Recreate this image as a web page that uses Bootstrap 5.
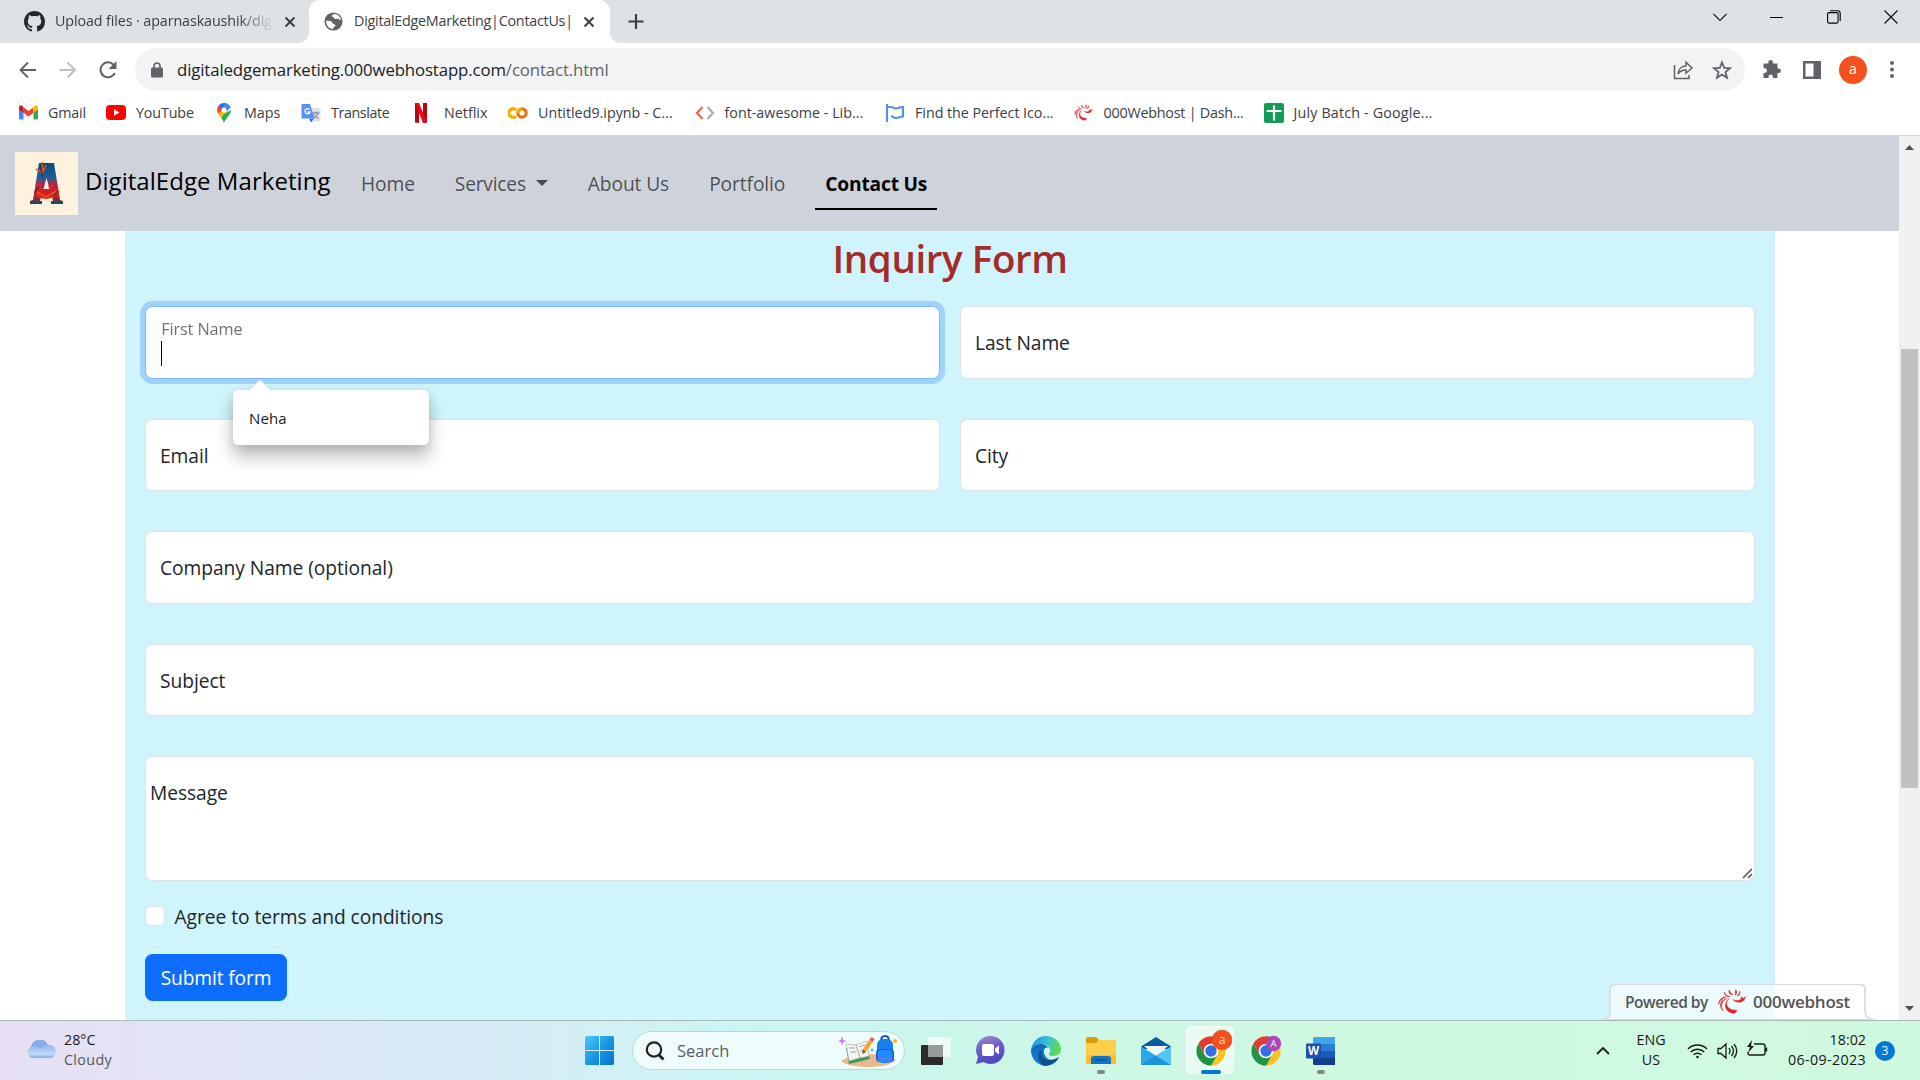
<!DOCTYPE html>
<html lang="en">
<head>
<meta charset="utf-8">
<title>DigitalEdgeMarketing|ContactUs|</title>
<link href="https://cdn.jsdelivr.net/npm/bootstrap@5.3.0/dist/css/bootstrap.min.css" rel="stylesheet">
<script src="https://cdn.jsdelivr.net/npm/bootstrap@5.3.0/dist/js/bootstrap.bundle.min.js"></script>
<style>
html{font-size:20px}
body{font-family:"Open Sans","Noto Sans",sans-serif;width:1920px;height:1080px;overflow:hidden;font-size:19.2px;line-height:30px}
svg{display:block;flex:none}
.ui{font-size:14.3px;line-height:20px;color:#3c4043;white-space:nowrap}
/* browser chrome */
.tabstrip{height:43px;background:#dee1e6}
.tab-idle{width:309px;padding-left:24px}
.tab-idle .ttl{width:219px;margin-left:10px;letter-spacing:-.1px;overflow:hidden;-webkit-mask-image:linear-gradient(90deg,#000 84%,transparent)}
.ttl{margin-bottom:2px}
.tab-live{width:301px;height:43px;background:#fff;border-radius:11px 11px 0 0;padding-left:15px}
.tab-live:before,.tab-live:after{content:"";position:absolute;bottom:0;width:10px;height:10px}
.tab-live:before{left:-10px;background:radial-gradient(circle at 0 0,transparent 9.5px,#fff 10px)}
.tab-live:after{right:-10px;background:radial-gradient(circle at 100% 0,transparent 9.5px,#fff 10px)}
.tab-live .ttl{width:219px;margin-left:11px;letter-spacing:-.24px;overflow:hidden}
.plus{margin-left:15px;margin-bottom:1px}
.winbtns{padding-right:22px;gap:43px}
.toolbar{height:53px;padding-left:18px}
.omni{width:1610px;height:43px;background:#f1f3f4;border-radius:22px;padding:0 13px 0 16px;margin-left:17px}
.url{font-size:16.8px;color:#202124;letter-spacing:-.12px;margin-left:14px}
.url span{color:#5f6368}
.starico{margin-left:18px}
.puzzle{margin-left:17px}
.avatar{width:28px;height:28px;background:#f4511e;color:#fff;font-size:14px;line-height:25px;margin:0 22px 0 17px}
.marks{height:40px;padding:0 0 6px 18px;border-bottom:1px solid #d5d7da}
.marks>div{display:flex;align-items:center;gap:10px;flex:none;width:188px}
.marks .ic{width:20px;display:flex;justify-content:center}
.marks>:nth-child(1){width:88px;letter-spacing:-.16px}
.marks>:nth-child(2){width:108px;letter-spacing:-.14px}
.marks>:nth-child(3){width:87px}
.marks>:nth-child(4){width:113px;letter-spacing:-.4px}
.marks>:nth-child(5){width:94px}
.marks>:nth-child(5) .ic{position:relative;left:-3px}
.marks>:nth-child(6){width:186.500px}
.marks>:nth-child(7){width:190.500px}
.marks>:nth-child(8){width:188.500px;letter-spacing:-.04px}
.marks>:nth-child(9){width:190px;letter-spacing:-.21px}
.marks>:nth-child(10){letter-spacing:.17px}
/* page */
.viewport{height:884px}
.page{width:1899px}
.topnav{height:95px;padding:0 0 0 15px;background:#ced3db}
.brand{font-size:24px;color:#000;letter-spacing:.05px;margin:0 20px 5px 7px;white-space:nowrap;line-height:36px;width:246px}
.topnav .nav-link{padding:11px 10px 9px;margin:0 10px;line-height:30px;color:rgba(0,0,0,.65);border-bottom:2px solid transparent;white-space:nowrap;letter-spacing:-.1px}
.topnav .nav-link.active{color:#000;font-weight:700;letter-spacing:-.19px;border-color:#000}
.topnav .dropdown-toggle{letter-spacing:-.21px}
.topnav .dropdown-toggle:after{margin-left:10px;border-top-width:6px;border-left-width:6px;border-right-width:6px;vertical-align:5px}
.sheet{width:1650px;height:789px;margin-left:125px;background:#cff4fc;padding:3px 20px 0}
.sheet h1{font-size:38.5px;font-weight:600;color:#a52a2a;letter-spacing:-.41px;line-height:48px;height:72px;margin:0;text-align:center}
.sheet .form-floating{height:72.5px;margin-bottom:40px}
.sheet .form-control{height:100%;min-height:0;border-color:#dee2e6;border-radius:7.5px;background:#fff;resize:none}
.sheet .form-floating>label{padding:22px 15px 19px;height:auto;line-height:30px;color:#212529;opacity:1;border:0;letter-spacing:-.05px}
.typing .form-control{border-color:#86b7fe;box-shadow:0 0 0 5px rgba(13,110,253,.25)}
.sheet .typing>label{opacity:.65;transform:scale(.85) translateY(-10px) translateX(4px);letter-spacing:-.15px}
.caret{position:absolute;left:16px;top:35px;width:1px;height:25px;background:#000}
.sheet .msg{height:125px;margin-bottom:20px}
.sheet .msg>label{padding-left:5px}
.grip{position:absolute;right:2px;bottom:2px}
.sheet .form-check{padding:0;margin:0;min-height:0;height:53px;gap:9.5px}
.sheet .form-check label{padding-top:1px;letter-spacing:-.04px}
.sheet .form-check-input{width:20px;height:20px;margin:5px 0 0;float:none;border-color:#dee2e6;border-radius:5px}
.sheet .btn{font-size:19.2px;letter-spacing:-.14px;width:142px;height:47px;padding:2px 0 0;border:0;border-radius:7.5px;background:#0d6efd}
.suggest{position:absolute;left:88px;top:84px;width:196px;height:55px;border-radius:5px;background:#fff;box-shadow:0 12px 18px rgba(0,0,0,.26),0 2px 8px rgba(0,0,0,.1);z-index:5;padding:17px 16px;font-size:15px;line-height:22px;color:#202124;letter-spacing:.1px}
.suggest svg{position:absolute;left:16px;top:-11px}
.powered{position:absolute;left:1600px;bottom:0;width:276px;height:36px;z-index:4}
.powered>svg:first-child{position:absolute;left:0;top:0}
.powered .txt{position:relative;padding-left:25px;height:36px;color:#555;font-weight:600;white-space:nowrap}
.pw1{font-size:15.5px;letter-spacing:-.5px;width:83px}
.pwi{margin:0 6px 1px 9px}
.pw2{font-size:17px;letter-spacing:-.26px}
.sb{width:21px;background:#f0f0f0}
.thumb{width:17px;height:439px;background:#c1c1c1;margin:213px auto 210px}
/* taskbar */
.taskbar{height:60px;border-top:1px solid #a9b8b8;background:linear-gradient(90deg,#e7dff3 0,#dfe6f6 14%,#d5eef6 28%,#c9f7f3 42%,#cbf6ea 50%,#cff8e2 65%,#cff9df 100%)}
.weather{width:560px;line-height:20px;gap:8px;padding-bottom:2px;margin-left:25px}
.weather svg{margin-bottom:3px}
.weather .ui{color:#1b1b1f}
.weather .cloudy{letter-spacing:.35px;color:#55565c}
.pill{width:273px;height:39px;border-radius:20px;background:rgba(255,255,255,.68);border:1px solid #b5dcdc;margin:0 3px 0 18px;padding:0 6px 0 12px}
.pill span{font-size:16.5px;color:#5a5f62;margin-left:12px}
.cell{width:55px;height:60px;flex:none;position:relative}
.cell.live:before{content:"";position:absolute;left:3px;top:5px;width:48px;height:48px;border-radius:6px;background:rgba(255,255,255,.55);border:1px solid rgba(255,255,255,.5)}
.cell.run:after,.cell.live:after{content:"";position:absolute;bottom:6.5px;width:8px;height:4px;border-radius:2px;background:#7b8c85}
.cell.live:after{width:20px;background:#0078d4}
.cell svg{position:relative;overflow:visible}
.tray{color:#1a1a1a;padding-right:25px}
.tray .ui{color:#1a1a1a;padding-bottom:2px}
.lang{width:40px;margin:0 16px 0 21px}
.vol,.bat{margin-left:9px}
.bat{margin-top:-3px}
.clock{width:98px;margin-right:9px}
.clock span{letter-spacing:.34px}
.count{width:20px;height:20px;background:#0078d4;color:#fff;font-size:12px;line-height:20px;text-align:center}
</style>
</head>
<body>
<svg width="0" height="0" class="position-absolute">
<defs>
<symbol id="x" viewBox="0 0 12 12"><path d="M1.500 1.500l9 9m0-9l-9 9" stroke="#3c4043" stroke-width="2" fill="none"/></symbol>
<symbol id="swirl" viewBox="0 0 30 26"><g fill="#e0252c" stroke="#e0252c" stroke-width=".5"><path d="M12 1c-1 3 1 5 4 5-2-1-3-3-4-5z"/><path d="M19 .5c-1 2 0 4-1 6 2-1 3-3 1-6z"/><path d="M23 2c0 2-1 4-3 5 3 0 4-2 3-5z"/><path d="M7 3c0 3 2 5 6 5-3-1-5-2-6-5z"/><path d="M29 8c-1 6-8 8-13 3 4 2 9 1 9-3 1 2 2 2 4 0z"/><path d="M12 10c-6 5-1 13 8 12-1 3-3 4-5 3-8-1-9-11-3-15z"/><path d="M10 10c-5 1-8 8-4 13-5-4-4-12 4-13z"/><path d="M9 8c-4 0-8 3-8 8 1-4 4-6 8-8z"/></g></symbol>
<symbol id="chrome" viewBox="0 0 48 48"><path fill="#e33b2e" d="M4.950 13A22 22 0 0 1 43.050 13H24L14.470 29.500Z"/><path fill="#fcc31e" d="M43.050 13A22 22 0 0 1 24 46L33.530 29.500 24 13Z"/><path fill="#229342" d="M24 46A22 22 0 0 1 4.950 13L14.470 29.500 24 35 33.530 29.500Z"/><circle cx="24" cy="24" r="11" fill="#fff"/><circle cx="24" cy="24" r="8.500" fill="#2f6fe4"/></symbol>
</defs>
</svg>

<div class="tabstrip d-flex align-items-center ui">
  <div class="tab-idle d-flex align-items-center">
    <svg width="21" height="21" viewBox="0 0 16 16" fill="#24292f"><path d="M8 0C3.580 0 0 3.580 0 8c0 3.540 2.290 6.530 5.470 7.590.4.070.55-.17.55-.38 0-.19-.01-.82-.01-1.490-2.010.37-2.530-.49-2.690-.94-.09-.23-.48-.94-.82-1.130-.28-.15-.68-.52-.01-.53.63-.01 1.080.58 1.230.82.720 1.210 1.870.87 2.330.66.070-.52.28-.87.51-1.070-1.780-.2-3.640-.89-3.640-3.950 0-.87.31-1.590.82-2.150-.08-.2-.36-1.020.08-2.120 0 0 .67-.21 2.200.82.640-.18 1.320-.27 2-.27s1.360.09 2 .27c1.530-1.040 2.200-.82 2.200-.82.440 1.100.16 1.920.08 2.120.51.56.82 1.270.82 2.150 0 3.070-1.870 3.750-3.650 3.950.29.25.54.73.54 1.480 0 1.070-.01 1.930-.01 2.200 0 .21.15.46.55.38A8.010 8.010 0 0 0 16 8c0-4.420-3.580-8-8-8z"/></svg>
    <span class="ttl">Upload files · aparnaskaushik/dig</span>
    <svg class="ms-2" width="12" height="12"><use href="#x"/></svg>
  </div>
  <div class="tab-live position-relative d-flex align-items-center">
    <svg width="19" height="19" viewBox="0 0 20 20"><circle cx="10" cy="10" r="9.500" fill="#5f6368"/><path fill="#fff" d="M11.500 2.200c-1 .6-2.800.5-3.200 1.600-.3 1.200.9 1.700 2 1.900.9.300.6 1.300 1.500 1.600 1.700.5 2.600-.7 3.900.3.700.6 1.500 1 2.200.7C17.400 5.400 15 2.900 11.500 2.200zM2.300 9.200c1.700-.2 3.800-.2 5.200.5 1.700.9 1 2.500 2.500 3 1 .4 2 .5 2.100 1.600 0 .9-1 1-1.700 1.600-.5.5-.7 1.200-.8 2-4.400 0-7.600-4-7.300-8.700z"/></svg>
    <span class="ttl">DigitalEdgeMarketing|ContactUs|</span>
    <svg class="ms-2" width="12" height="12"><use href="#x"/></svg>
  </div>
  <svg class="plus" width="20" height="20" viewBox="0 0 20 20"><path d="M11 3v15M3.500 10.500h15" stroke="#3c4043" stroke-width="2.200"/></svg>
  <div class="winbtns d-flex align-items-center ms-auto mb-2">
    <svg width="14" height="14" viewBox="0 0 14 14" fill="none" stroke="#222" stroke-width="1.100"><path d="M.5 4l6.500 6.500L13.500 4"/></svg>
    <svg width="14" height="14" viewBox="0 0 14 14"><path d="M0 7.500h13" stroke="#000"/></svg>
    <svg width="14" height="14" viewBox="0 0 14 14" fill="none" stroke="#000" stroke-width="1.100"><rect x=".6" y="2.600" width="10.500" height="10.500" rx="1.500"/><path d="M3 .8h7.500a2.700 2.700 0 0 1 2.700 2.700V11"/></svg>
    <svg width="14" height="14" viewBox="0 0 14 14"><path d="M.5.500l13 13m0-13l-13 13" stroke="#111" stroke-width="1.200"/></svg>
  </div>
</div>

<div class="toolbar d-flex align-items-center ui">
  <svg width="20" height="20" viewBox="0 0 20 20" fill="none" stroke="#5f6368" stroke-width="1.900"><path d="M18 10H3M10 2.500L2.500 10l7.500 7.500"/></svg>
  <svg class="ms-3" width="20" height="20" viewBox="0 0 20 20" fill="none" stroke="#bcbec1" stroke-width="1.900"><path d="M1.500 10h15M9.500 2.500l7.500 7.500-7.500 7.500"/></svg>
  <svg class="ms-3" width="20" height="20" viewBox="0 0 20 20" fill="none" stroke="#5f6368" stroke-width="2"><path d="M16.800 13a7.500 7.500 0 1 1-1.300-8.300l1.500 1.800"/><path d="M18.500 1v8h-8z" fill="#5f6368" stroke="none"/></svg>
  <div class="omni d-flex align-items-center">
    <svg width="12" height="16" viewBox="0 0 12 16"><path d="M3 6V4a3 3 0 0 1 6 0v2" stroke="#5f6368" stroke-width="1.700" fill="none"/><rect y="5.500" width="12" height="10" rx="1.500" fill="#5f6368"/></svg>
    <div class="url">digitaledgemarketing.000webhostapp.com<span>/contact.html</span></div>
    <svg class="ms-auto" width="21" height="20" viewBox="0 0 21 20" fill="none" stroke="#5f6368" stroke-width="1.500"><path d="M1.500 5v13.500H16V15"/><path d="M5 14c.4-5.500 4-8 8-8V2.200l6 5.800-6 5.200V10c-4 0-6.500 1.500-8 4z"/></svg>
    <svg class="starico" width="20" height="20" viewBox="0 0 20 20" fill="none" stroke="#5f6368" stroke-width="1.800"><path d="M10 2.500l2.200 5.400 5.800.4-4.500 3.700 1.500 5.700-5-3.200-5 3.200 1.500-5.700L2 8.300l5.800-.4z"/></svg>
  </div>
  <svg width="20" height="20" viewBox="0 0 20 20" class="puzzle"><path fill="#5f6368" d="M1.500 3.500h4.800V2.400a2.300 2.300 0 0 1 4.600 0v1.100h4.600v5h1.200a2.200 2.200 0 0 1 0 4.400h-1.200v5h-4.600v-1.200a2.200 2.200 0 0 0-4.400 0v1.200h-5v-5h1.200a2.300 2.300 0 0 0 0-4.600H1.500z"/></svg>
  <svg width="20" height="20" viewBox="0 0 20 20" class="ms-3"><path fill="#5f6368" d="M1 1h18v18H1zM3.500 3.500v13h8v-13z" fill-rule="evenodd"/></svg>
  <div class="avatar rounded-circle text-center">a</div>
  <svg width="6" height="20" viewBox="0 0 6 20" fill="#5f6368"><circle cx="3" cy="3" r="2"/><circle cx="3" cy="9.500" r="2"/><circle cx="3" cy="16" r="2"/></svg>
</div>

<div class="marks d-flex align-items-center ui">
  <div><span class="ic"><svg width="19" height="15" viewBox="0 0 19 15"><path fill="#4285f4" d="M0 2v11.500Q0 14.500 1 14.500h3.500V5z"/><path fill="#34a853" d="M14.500 14.500H18q1 0 1-1V2l-4.500 3z"/><path fill="#ea4335" d="M4.500 7.800V2.200l5 3.800 5-3.800v5.600l-5 3.800z"/><path fill="#c5221f" d="M0 2.500C0 .3 2-.3 3.500.900l1 1v5.900L0 4.500z"/><path fill="#fbbc04" d="M19 2.500C19 .3 17-.3 15.500.900l-1 1v5.900L19 4.500z"/></svg></span>Gmail</div>
  <div><span class="ic"><svg width="20" height="15" viewBox="0 0 20 15"><rect width="20" height="15" rx="4" fill="#f00"/><path d="M8 4.200l5.500 3.300L8 10.800z" fill="#fff"/></svg></span>YouTube</div>
  <div><span class="ic"><svg width="14" height="20" viewBox="0 0 14 20"><path fill="#34a853" d="M14 7c0 5-5 7-7 13-1-3-2.500-5-4-7z"/><path fill="#fbbc04" d="M1.200 10.800L6 5.500l3 3.500-5 6c-1.100-1.500-2.200-2.700-2.800-4.200z"/><path fill="#ea4335" d="M1.700 2.500L6 6 1.200 10.800C-.5 8 0 4.700 1.700 2.500z"/><path fill="#1a73e8" d="M1.700 2.500C3.300.500 6 -.5 9 .3L5.500 5.800z"/><path fill="#4285f4" d="M9 .3c2 .6 3.800 2.100 4.600 4.200L9 9 5 6z"/><circle cx="7" cy="7" r="2.500" fill="#fff"/></svg></span>Maps</div>
  <div><span class="ic"><svg width="20" height="20" viewBox="0 0 20 20"><path fill="#dfe1e4" d="M8 5h10.500q1 0 1 1v11.500q0 1-1 1H12z"/><path d="M11.500 10h7M15 8.500V10m2 0c-.5 2-2.500 4-4 5m0-3.500c1 1.500 2.500 3 4.500 4" stroke="#6b7785" fill="none"/><path fill="#3367d6" d="M8 15.500h5l-3 4z"/><path fill="#5492f5" d="M1.500 1H9l4.500 14.500h-12q-1 0-1-1V2q0-1 1-1z"/><path d="M8.500 6.500A2.600 2.600 0 1 0 9 9H6.500" stroke="#fff" stroke-width="1.300" fill="none"/></svg></span>Translate</div>
  <div><span class="ic"><svg width="12" height="20" viewBox="0 0 12 20"><path fill="#b20710" d="M0 0h4v20l-4-.5zM8 0h4v19.500L8 20z"/><path fill="#e50914" d="M0 0h4l8 19.500L8 20z"/></svg></span>Netflix</div>
  <div><span class="ic"><svg width="20" height="12" viewBox="0 0 20 12" fill="none" stroke-width="3.200"><path d="M8 2.800A4.300 4.300 0 1 0 8 9.200" stroke="#f9ab00"/><circle cx="14" cy="6" r="4.200" stroke="#e8710a"/><path d="M9.800 6A4.200 4.200 0 0 1 14 1.800" stroke="#f9ab00"/></svg></span>Untitled9.ipynb - C...</div>
  <div><span class="ic"><svg width="20" height="14" viewBox="0 0 20 14" fill="none" stroke-width="2.200"><path d="M7.500 1L2 7l5.500 6" stroke="#e8693f"/><path d="M12.500 1L18 7l-5.500 6" stroke="#a9adae"/></svg></span>font-awesome - Lib...</div>
  <div><span class="ic"><svg width="20" height="18" viewBox="0 0 20 18" fill="none" stroke="#5393e6" stroke-width="2.200"><path d="M2 0v18M2 3h4c2 0 3 1.500 5 1.500 3 0 3-1.500 7-1.500v9.500c-3 0-4 1.500-7 1.500-2 0-3-2-5-1.500"/></svg></span>Find the Perfect Ico...</div>
  <div><span class="ic"><svg width="19" height="17"><use href="#swirl"/></svg></span>000Webhost | Dash...</div>
  <div><span class="ic"><svg width="20" height="20" viewBox="0 0 20 20"><rect width="20" height="20" rx="2" fill="#0f9d58"/><path d="M2.500 8h15M10 2.500v15" stroke="#fff" stroke-width="2.200"/></svg></span>July Batch - Google...</div>
</div>

<div class="viewport d-flex position-relative">
  <div class="page">
    <nav class="topnav d-flex align-items-center">
      <svg width="63" height="63" viewBox="0 0 63 63"><defs><linearGradient id="ag" x2="0" y2="1"><stop offset="0" stop-color="#0b4b72"/><stop offset=".35" stop-color="#1c5f9e"/><stop offset=".52" stop-color="#a32c50"/><stop offset=".75" stop-color="#e5151a"/><stop offset="1" stop-color="#104b63"/></linearGradient></defs><rect width="63" height="63" fill="#fdf2de"/><path fill="url(#ag)" fill-rule="evenodd" d="M24 11h15l6 37 3 1v3H36v-3h2l-1-5H26l-1 5h2v3H15v-3l3-1zM31.500 26l-3 11h6z"/><path fill="#e3261c" d="M20 39l6 2 5 4 6-4 8-2-5 6-8 2-9-1zM33 35l7-6-3 9zM21 34l7 5-3-9z"/><path d="M21 17l7 4M27 10l1 10 3-7M22 40l9 5 12-7" stroke="#e5531d" stroke-width="1.500" fill="none"/><path d="M25 14l3 12M19 41l5-7M39 44l4-6" stroke="#15384f" fill="none"/></svg>
      <div class="brand">DigitalEdge Marketing</div>
      <div class="nav flex-nowrap">
        <a class="nav-link ms-0">Home</a>
        <a class="nav-link dropdown-toggle">Services</a>
        <a class="nav-link">About Us</a>
        <a class="nav-link">Portfolio</a>
        <a class="nav-link active">Contact Us</a>
      </div>
    </nav>
    <form class="sheet" autocomplete="off">
      <h1>Inquiry Form</h1>
      <div class="row gx-4">
        <div class="col-6 pe-2"><div class="form-floating typing">
          <input class="form-control" placeholder=" "><label>First Name</label><i class="caret"></i>
          <div class="suggest"><svg width="23" height="12" viewBox="0 0 23 12"><path d="M0 11.500L11 .5l11 11" fill="#fff" stroke="#c3d5da" stroke-width=".7"/></svg>Neha</div>
        </div></div>
        <div class="col-6 ps-2"><div class="form-floating"><input class="form-control" placeholder=" "><label>Last Name</label></div></div>
        <div class="col-6 pe-2"><div class="form-floating"><input class="form-control" placeholder=" "><label>Email</label></div></div>
        <div class="col-6 ps-2"><div class="form-floating"><input class="form-control" placeholder=" "><label>City</label></div></div>
      </div>
      <div class="form-floating"><input class="form-control" placeholder=" "><label>Company Name (optional)</label></div>
      <div class="form-floating"><input class="form-control" placeholder=" "><label>Subject</label></div>
      <div class="form-floating msg"><textarea class="form-control" placeholder=" "></textarea><label>Message</label><svg class="grip" width="11" height="11" viewBox="0 0 11 11"><path d="M1 10l9-9M6 10l4-4" stroke="#555" stroke-width="1.600"/></svg></div>
      <div class="form-check d-flex align-items-start"><input class="form-check-input" type="checkbox"><label>Agree to terms and conditions</label></div>
      <button class="btn btn-primary" type="button">Submit form</button>
    </form>
  </div>
  <div class="powered">
    <svg width="276" height="36" viewBox="0 0 276 36"><path d="M0 36c7 0 10-3 10-9V6q0-6 6-6h243q6 0 6 6v21c0 6 4 9 11 9z" fill="#fff" fill-opacity=".6" stroke="#d9dcdd" stroke-width="1.800"/></svg>
    <div class="txt d-flex align-items-center"><span class="pw1">Powered by</span><svg class="pwi" width="30" height="25"><use href="#swirl"/></svg><span class="pw2">000webhost</span></div>
  </div>
  <div class="sb">
    <svg class="position-absolute" width="21" height="20" viewBox="0 0 21 20"><path d="M6 14h9l-4.500-5z" fill="#505050"/></svg>
    <div class="thumb d-flow-root"></div>
    <svg width="21" height="20" viewBox="0 0 21 20"><path d="M6 8h9l-4.500 5z" fill="#505050"/></svg>
  </div>
</div>

<div class="taskbar d-flex align-items-center">
  <div class="weather d-flex align-items-center">
    <svg width="31" height="21" viewBox="0 0 31 21"><defs><linearGradient id="cl" x2="0" y2="1"><stop offset="0" stop-color="#8db4ef"/><stop offset=".7" stop-color="#bfdcf9"/><stop offset="1" stop-color="#7da7ee"/></linearGradient></defs><path fill="#86abe9" d="M6 9a9 9 0 0 1 17-2 7 7 0 0 1 0 13H8A6 6 0 0 1 6 9z"/><path fill="url(#cl)" d="M7 20a6 6 0 0 1-1-11q5-2 10 2 3-5 9-4a6.500 6.500 0 0 1-1 13z"/></svg>
    <div class="ui">28°C<br><span class="cloudy">Cloudy</span></div>
  </div>
  <svg width="29" height="29" viewBox="0 0 29 29"><defs><linearGradient id="wn" x2="1" y2="1"><stop offset="0" stop-color="#4cc9fb"/><stop offset=".55" stop-color="#1593e0"/><stop offset="1" stop-color="#0872d0"/></linearGradient></defs><path fill="url(#wn)" d="M1 0h13v14H0V1zM15 0h13l1 1v13H15zM0 15h14v14H1l-1-1zM15 15h14v13l-1 1H15z"/></svg>
  <div class="pill d-flex align-items-center">
    <svg width="20" height="20" viewBox="0 0 20 20" fill="none" stroke="#222"><circle cx="9" cy="8.500" r="7.200" stroke-width="2.200"/><path d="M14 14l4.500 4.500" stroke-width="2.800"/></svg>
    <span>Search</span>
    <svg class="ms-auto" width="60" height="32" viewBox="0 0 60 32"><path fill="#e8b98c" d="M3 26q10-7 30-7 20 1 25 6-6 7-30 7-20-1-25-6z"/><path fill="#3f9a53" d="M8 13l20-4 4 15-21 5z"/><path fill="#f4f4f0" stroke="#a3a8a8" stroke-width=".6" d="M8 9l10 1 11-4 2 15-9 2-11 3z"/><path d="M18 10l4 13M11 13l6 0M12 17l6 0M21 12l6-2M22 16l7-2" stroke="#888" stroke-width=".7" fill="none"/><path stroke="#f7a530" stroke-width="4" d="M26 16L33 6"/><path stroke="#ef5450" stroke-width="4" d="M33 6l2-3"/><path d="M24 19l1-4 3 2z" fill="#70462b"/><path d="M43 6q0-5 4-5t4 5" fill="none" stroke="#0d55bd" stroke-width="2"/><rect x="39" y="4" width="16" height="24" rx="6" fill="#1681ee"/><rect x="38" y="14" width="18" height="13" rx="4" fill="#0b60d0"/><rect x="39.500" y="15" width="15" height="12" rx="4" fill="#1c8cff"/><path d="M40 21q7 5 14 0v4H40z" fill="#6f6ef0"/><path d="M4 1l1 4 4 1-4 1-1 4-1-4-3-1 3-1z" fill="#d66bf0"/><circle cx="57" cy="6" r="2" fill="#ffb21a"/><circle cx="34" cy="15" r="1.500" fill="#39c4e8"/></svg>
  </div>
  <div class="cell d-flex align-items-center justify-content-center"><svg width="30" height="28" viewBox="0 0 30 28"><rect y="8" width="22" height="20" rx="1" fill="#2a2b2a"/><rect x="7" width="23" height="20" rx="1" fill="#f8fbfa" fill-opacity=".8"/><path d="M7 8h15v12H7z" fill="#969a98"/></svg></div>
  <div class="cell d-flex align-items-center justify-content-center"><svg width="29" height="29" viewBox="0 0 29 29"><defs><linearGradient id="ch" x2=".3" y2="1"><stop offset="0" stop-color="#a38ac9"/><stop offset=".5" stop-color="#6a5fc6"/><stop offset="1" stop-color="#4d4bc3"/></linearGradient></defs><path fill="url(#ch)" d="M14.500 0a14 14 0 0 1 0 28q-4 0-7-2L0 28l2-7A14 14 0 0 1 14.500 0z"/><rect x="6" y="8" width="12" height="12" rx="2" fill="#fff"/><path fill="#fff" d="M19 12.500l4-3v9l-4-3z"/></svg></div>
  <div class="cell d-flex align-items-center justify-content-center"><svg width="30" height="30" viewBox="0 0 30 30"><defs><linearGradient id="e1" x2="1" y2=".2"><stop offset="0" stop-color="#1a8fdd"/><stop offset=".55" stop-color="#34c0dc"/><stop offset="1" stop-color="#60dc50"/></linearGradient><linearGradient id="e2" x2=".3" y2="1"><stop offset="0" stop-color="#0e62b3"/><stop offset="1" stop-color="#138ae0"/></linearGradient></defs><path fill="url(#e2)" d="M0 14C2 7 12 5 18 12c-5-2-7 4-3 9s10 4 13 0c-4 8-12 10-18 8C4 27 0 21 0 14z"/><path fill="#124f91" d="M11 14c-2 9 7 13 17 7-4 8-12 9.500-16 8.500C5 25 6 16 11 14z"/><path fill="url(#e1)" d="M0 14C1 6 7 0 15 0c9 0 15 7 15 13 0 5-4 7-8 7-3 0-5-1-4-2 3-3 1-9-7-10C6 8 2 10 0 14z"/></svg></div>
  <div class="cell run d-flex align-items-center justify-content-center"><svg width="30" height="27" viewBox="0 0 30 27"><path fill="#dc9b07" d="M0 2q0-2 2-2h8l3 3-3 4H0z"/><path fill="#fdcf4a" d="M0 6h10l3-3h16q1 0 1 1v23H0z"/><path fill="#f9be2b" d="M0 18h30v9H0z"/><path fill="#1273c4" d="M5 27v-5q0-3 3-3h14q3 0 3 3v5z"/><path d="M9 23h12" stroke="#0c4b8a" stroke-width="1.200"/></svg></div>
  <div class="cell d-flex align-items-center justify-content-center"><svg width="30" height="28" viewBox="0 0 30 28"><path fill="#0c59a4" d="M0 9.500L15 0l15 9.500V12H0z"/><path fill="#f3f4f5" d="M3 9h24L15 19z"/><path fill="#29a9ea" d="M0 9.500l30 18.500H0z"/><path fill="#50c8f5" d="M30 9.500V28L15 18.500z"/><path fill="#1f92dc" d="M0 28L15 18.500 30 28z"/></svg></div>
  <div class="cell live d-flex align-items-center justify-content-center"><svg width="32" height="32" viewBox="0 0 32 32"><use href="#chrome" width="32" height="32"/><circle cx="27" cy="5" r="10" fill="#f4511e" stroke="#c8502c" stroke-width=".6"/><text x="27" y="9" text-anchor="middle" font-size="12" fill="#fde3d8">a</text></svg></div>
  <div class="cell d-flex align-items-center justify-content-center"><svg width="32" height="32" viewBox="0 0 32 32"><use href="#chrome" width="32" height="32"/><circle cx="23.500" cy="8.500" r="7.700" fill="#ab47bc"/><text x="23.500" y="12" text-anchor="middle" font-size="9.500" fill="#fff">A</text></svg></div>
  <div class="cell run d-flex align-items-center justify-content-center"><svg width="30" height="28" viewBox="0 0 30 28"><path fill="#41a5ee" d="M8 0h21v7H7V1z"/><path fill="#2b7cd3" d="M7 7h22v7H7z"/><path fill="#185abd" d="M7 14h22v7H7z"/><path fill="#103f91" d="M7 21h22v7H8l-1-1z"/><rect y="6.500" width="15" height="15" rx="1" fill="#1c4fab"/><text x="7.500" y="18" text-anchor="middle" font-size="11.500" font-weight="700" fill="#fff">W</text></svg></div>
  <div class="tray d-flex align-items-center ms-auto">
    <svg width="14" height="9" viewBox="0 0 14 9"><path d="M1 8l6-6 6 6" stroke="#1a1a1a" stroke-width="1.800" fill="none"/></svg>
    <div class="ui text-center lang">ENG<br>US</div>
    <svg width="21" height="16" viewBox="0 0 21 16" fill="none" stroke="#1a1a1a" stroke-width="1.500"><path d="M1 6a13.500 13.500 0 0 1 19 0M3.800 9a9.500 9.500 0 0 1 13.400 0M6.600 11.800a5.500 5.500 0 0 1 7.800 0"/><circle cx="10.500" cy="14" r="1.300" fill="#1a1a1a" stroke="none"/></svg>
    <svg class="vol" width="21" height="18" viewBox="0 0 21 18" fill="none" stroke="#1a1a1a" stroke-width="1.300"><path d="M1 6.500h3l5-4.500v14l-5-4.500H1zM12 6q2 3 0 6M14.500 4q4 5 0 10M17 2q5.500 7 0 14"/></svg>
    <svg class="bat" width="21" height="18" viewBox="0 0 21 18" fill="none" stroke="#1a1a1a" stroke-width="1.400"><path d="M7 4h9q2 0 2 2v7q0 2-2 2H3q-2 0-2-2v-1M19.500 7.500v4"/><path d="M5 0L0 7h3l-2 6 6-7H4z" fill="#1a1a1a" stroke="none"/></svg>
    <div class="ui text-end clock">18:02<br><span>06-09-2023</span></div>
    <div class="count rounded-circle">3</div>
  </div>
</div>
</body>
</html>
